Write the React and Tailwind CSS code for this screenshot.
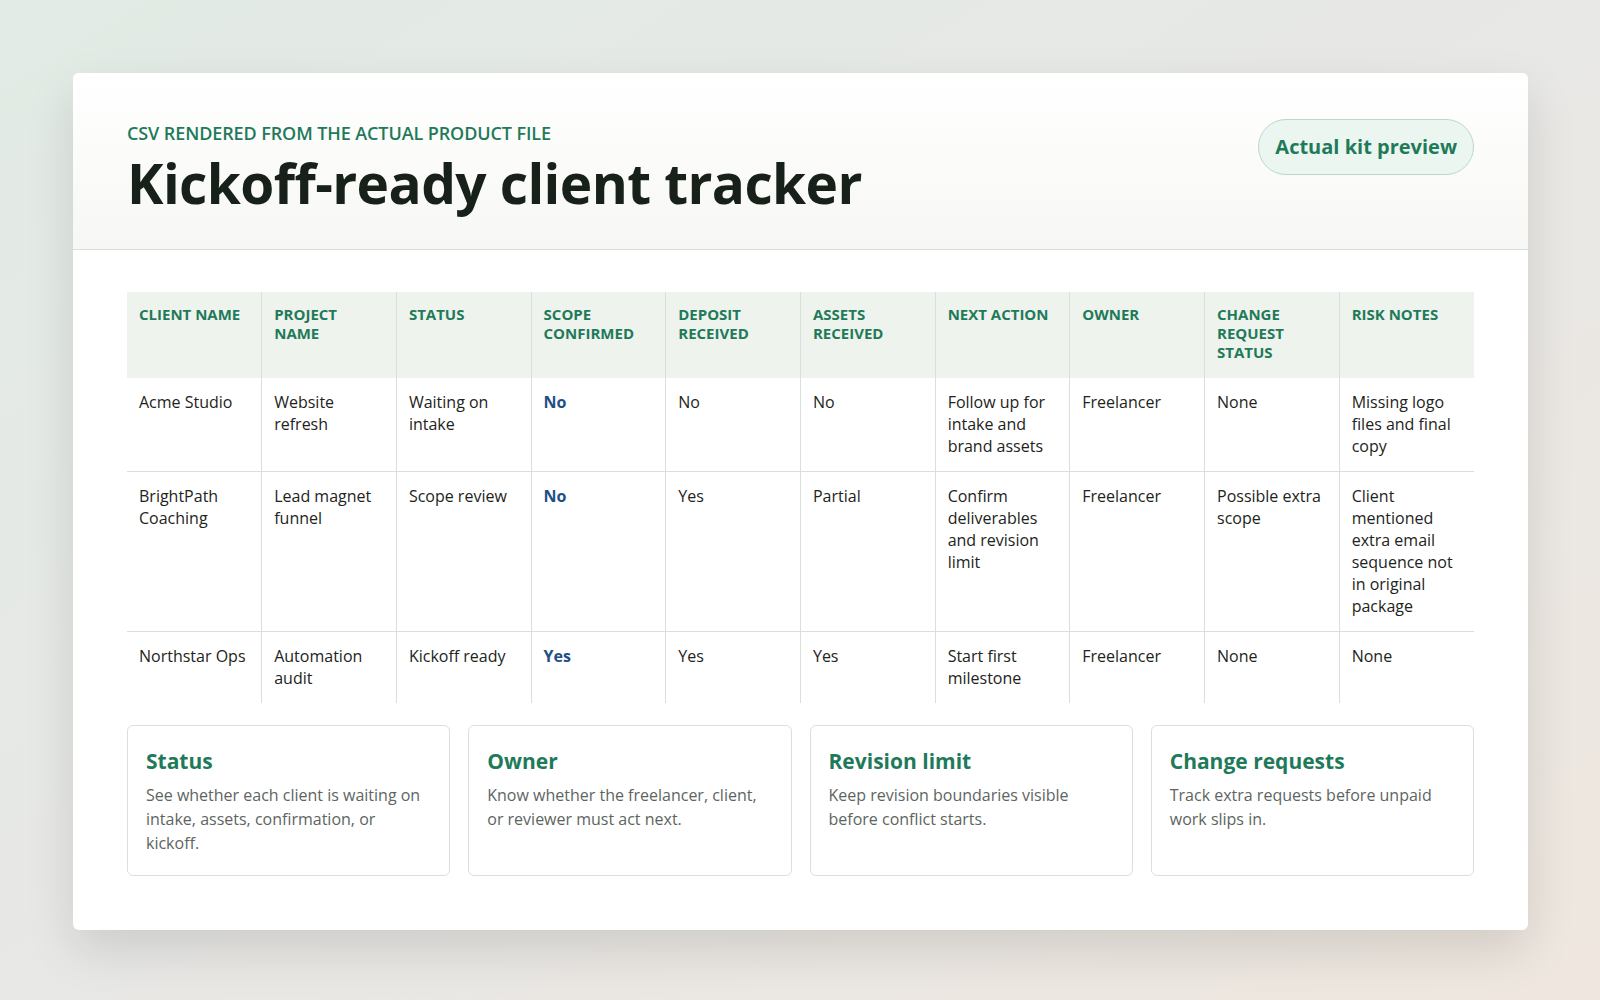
const cols = ["CLIENT NAME","PROJECT NAME","STATUS","SCOPE CONFIRMED","DEPOSIT RECEIVED","ASSETS RECEIVED","NEXT ACTION","OWNER","CHANGE REQUEST STATUS","RISK NOTES"];
const rows = [
  ["Acme Studio","Website refresh","Waiting on intake","No","No","No","Follow up for intake and brand assets","Freelancer","None","Missing logo files and final copy"],
  ["BrightPath Coaching","Lead magnet funnel","Scope review","No","Yes","Partial","Confirm deliverables and revision limit","Freelancer","Possible extra scope","Client mentioned extra email sequence not in original package"],
  ["Northstar Ops","Automation audit","Kickoff ready","Yes","Yes","Yes","Start first milestone","Freelancer","None","None"],
];
const cards = [
  ["Status","See whether each client is waiting on intake, assets, confirmation, or kickoff."],
  ["Owner","Know whether the freelancer, client, or reviewer must act next."],
  ["Revision limit","Keep revision boundaries visible before conflict starts."],
  ["Change requests","Track extra requests before unpaid work slips in."],
];
export default function App() {
  return (
    <div className="w-[1600px] h-[1000px] bg-gradient-to-br from-[#e2ebe5] via-[#e8e8e6] to-[#efe7df] pt-[73px] px-[73px]" style={{fontFamily:'"Open Sans","Noto Sans",sans-serif'}}>
      <div className="bg-white rounded-md shadow-[0_20px_50px_rgba(0,0,0,0.12)] overflow-hidden w-[1455px]">
        <div className="bg-gradient-to-b from-white to-[#f7f8f5] border-b border-[#d8e0db] px-[54px] pt-[47px] pb-[35px] flex justify-between items-start">
          <div>
            <div className="text-[#1f7a5a] text-[18px] font-semibold tracking-[-0.1px]">CSV RENDERED FROM THE ACTUAL PRODUCT FILE</div>
            <h1 className="text-[#172019] text-[55px] font-bold leading-[1.1] mt-[6px] tracking-[-0.6px]">Kickoff-ready client tracker</h1>
          </div>
          <div className="mt-[-1px] rounded-full border border-[#b8d8c8] bg-[#ecf6f0] px-[16px] py-[12px] text-[#1f7a5a] text-[20px] font-bold">Actual kit preview</div>
        </div>
        <div className="px-[54px] pt-[42px] pb-[54px]">
          <table className="w-full table-fixed border-collapse text-[16px] text-[#1d2420]">
            <thead>
              <tr className="bg-[#eef3ee]">
                {cols.map((c,i)=>(
                  <th key={c} className={`text-left align-top font-bold text-[15px] text-[#1f7a5a] px-[12px] pt-[13px] pb-[14px] h-[86px] leading-[19px] ${i>0?"border-l border-[#d9dfdb]":""}`}>{c}</th>
                ))}
              </tr>
            </thead>
            <tbody>
              {rows.map((r,ri)=>(
                <tr key={ri} className={ri<2?"border-b border-[#d9dfdb]":""}>
                  {r.map((c,i)=>(
                    <td key={i} className={`align-top px-[12px] pt-[13px] pb-[14px] leading-[22px] ${i>0?"border-l border-[#d9dfdb]":""} ${i===3?"font-bold text-[#1e4f86]":""}`}>{c}</td>
                  ))}
                </tr>
              ))}
            </tbody>
          </table>
          <div className="grid grid-cols-4 gap-[18px] mt-[22px]">
            {cards.map(([t,d])=>(
              <div key={t} className="border border-[#dcdfdc] rounded-md px-[18px] pt-[20px] pb-[18px] h-[151px]">
                <div className="text-[#1f7a5a] text-[21px] font-bold">{t}</div>
                <div className="text-[#5d655f] text-[16px] leading-[24px] mt-[6px]">{d}</div>
              </div>
            ))}
          </div>
        </div>
      </div>
    </div>
  );
}
